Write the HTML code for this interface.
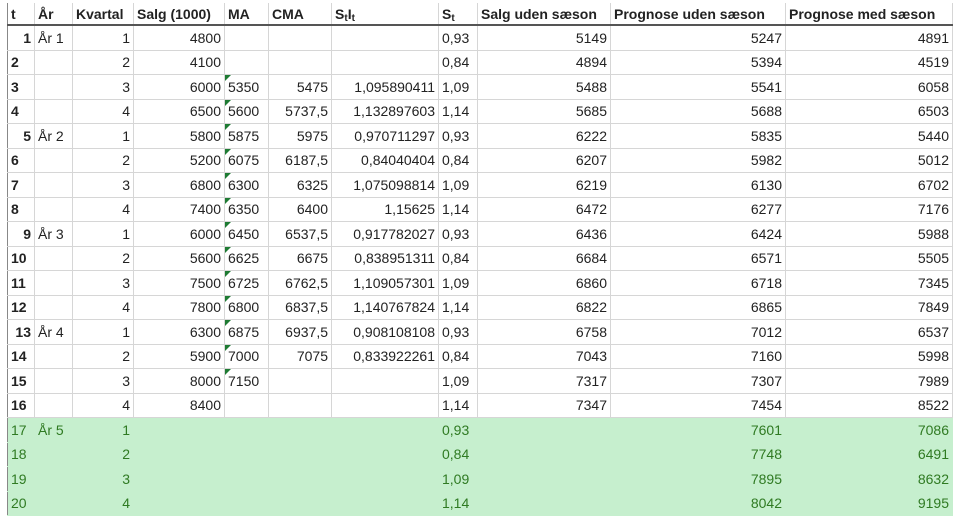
<!DOCTYPE html>
<html><head><meta charset="utf-8"><style>
html,body{margin:0;padding:0;background:#fff;width:966px;height:525px;overflow:hidden}
table{position:absolute;left:7px;top:3px;border-collapse:collapse;table-layout:fixed;font-family:"Liberation Sans",sans-serif;font-size:14px;color:#222}
td{border:1px solid #d6d6d6;padding:0 3px;height:23.5px;line-height:20px;white-space:nowrap;overflow:hidden;position:relative}
tr.h td{height:21px;font-weight:bold;border-bottom:2px solid #555;border-top:none;vertical-align:middle;padding-bottom:0}
td.r{text-align:right}
td.b{font-weight:bold}
tr.g td{background:#c6efce;color:#2f7a22;border-color:#c6efce}
td.m::before{content:"";position:absolute;left:0;top:0;border-top:6px solid #1e7b33;border-right:6px solid transparent}
tr td:first-child{border-left:1px solid #888}
sub{font-size:10px;vertical-align:-2px;line-height:0}
</style></head><body>
<table>
<colgroup><col style="width:27px"><col style="width:38px"><col style="width:61px"><col style="width:91px"><col style="width:44px"><col style="width:63px"><col style="width:107px"><col style="width:39px"><col style="width:133px"><col style="width:175px"><col style="width:167px"></colgroup>
<tr class="h"><td>t</td><td>År</td><td>Kvartal</td><td>Salg (1000)</td><td>MA</td><td>CMA</td><td>S<sub>t</sub>I<sub>t</sub></td><td>S<sub>t</sub></td><td>Salg uden sæson</td><td>Prognose uden sæson</td><td>Prognose med sæson</td></tr>
<tr><td class="r b">1</td><td>År 1</td><td class="r">1</td><td class="r">4800</td><td></td><td></td><td></td><td>0,93</td><td class="r">5149</td><td class="r">5247</td><td class="r">4891</td></tr>
<tr><td class="b">2</td><td></td><td class="r">2</td><td class="r">4100</td><td></td><td></td><td></td><td>0,84</td><td class="r">4894</td><td class="r">5394</td><td class="r">4519</td></tr>
<tr><td class="b">3</td><td></td><td class="r">3</td><td class="r">6000</td><td class="m">5350</td><td class="r">5475</td><td class="r">1,095890411</td><td>1,09</td><td class="r">5488</td><td class="r">5541</td><td class="r">6058</td></tr>
<tr><td class="b">4</td><td></td><td class="r">4</td><td class="r">6500</td><td class="m">5600</td><td class="r">5737,5</td><td class="r">1,132897603</td><td>1,14</td><td class="r">5685</td><td class="r">5688</td><td class="r">6503</td></tr>
<tr><td class="r b">5</td><td>År 2</td><td class="r">1</td><td class="r">5800</td><td class="m">5875</td><td class="r">5975</td><td class="r">0,970711297</td><td>0,93</td><td class="r">6222</td><td class="r">5835</td><td class="r">5440</td></tr>
<tr><td class="b">6</td><td></td><td class="r">2</td><td class="r">5200</td><td class="m">6075</td><td class="r">6187,5</td><td class="r">0,84040404</td><td>0,84</td><td class="r">6207</td><td class="r">5982</td><td class="r">5012</td></tr>
<tr><td class="b">7</td><td></td><td class="r">3</td><td class="r">6800</td><td class="m">6300</td><td class="r">6325</td><td class="r">1,075098814</td><td>1,09</td><td class="r">6219</td><td class="r">6130</td><td class="r">6702</td></tr>
<tr><td class="b">8</td><td></td><td class="r">4</td><td class="r">7400</td><td class="m">6350</td><td class="r">6400</td><td class="r">1,15625</td><td>1,14</td><td class="r">6472</td><td class="r">6277</td><td class="r">7176</td></tr>
<tr><td class="r b">9</td><td>År 3</td><td class="r">1</td><td class="r">6000</td><td class="m">6450</td><td class="r">6537,5</td><td class="r">0,917782027</td><td>0,93</td><td class="r">6436</td><td class="r">6424</td><td class="r">5988</td></tr>
<tr><td class="b">10</td><td></td><td class="r">2</td><td class="r">5600</td><td class="m">6625</td><td class="r">6675</td><td class="r">0,838951311</td><td>0,84</td><td class="r">6684</td><td class="r">6571</td><td class="r">5505</td></tr>
<tr><td class="b">11</td><td></td><td class="r">3</td><td class="r">7500</td><td class="m">6725</td><td class="r">6762,5</td><td class="r">1,109057301</td><td>1,09</td><td class="r">6860</td><td class="r">6718</td><td class="r">7345</td></tr>
<tr><td class="b">12</td><td></td><td class="r">4</td><td class="r">7800</td><td class="m">6800</td><td class="r">6837,5</td><td class="r">1,140767824</td><td>1,14</td><td class="r">6822</td><td class="r">6865</td><td class="r">7849</td></tr>
<tr><td class="r b">13</td><td>År 4</td><td class="r">1</td><td class="r">6300</td><td class="m">6875</td><td class="r">6937,5</td><td class="r">0,908108108</td><td>0,93</td><td class="r">6758</td><td class="r">7012</td><td class="r">6537</td></tr>
<tr><td class="b">14</td><td></td><td class="r">2</td><td class="r">5900</td><td class="m">7000</td><td class="r">7075</td><td class="r">0,833922261</td><td>0,84</td><td class="r">7043</td><td class="r">7160</td><td class="r">5998</td></tr>
<tr><td class="b">15</td><td></td><td class="r">3</td><td class="r">8000</td><td class="m">7150</td><td></td><td></td><td>1,09</td><td class="r">7317</td><td class="r">7307</td><td class="r">7989</td></tr>
<tr><td class="b">16</td><td></td><td class="r">4</td><td class="r">8400</td><td></td><td></td><td></td><td>1,14</td><td class="r">7347</td><td class="r">7454</td><td class="r">8522</td></tr>
<tr class="g"><td>17</td><td>År 5</td><td class="r">1</td><td></td><td></td><td></td><td></td><td>0,93</td><td></td><td class="r">7601</td><td class="r">7086</td></tr>
<tr class="g"><td>18</td><td></td><td class="r">2</td><td></td><td></td><td></td><td></td><td>0,84</td><td></td><td class="r">7748</td><td class="r">6491</td></tr>
<tr class="g"><td>19</td><td></td><td class="r">3</td><td></td><td></td><td></td><td></td><td>1,09</td><td></td><td class="r">7895</td><td class="r">8632</td></tr>
<tr class="g"><td>20</td><td></td><td class="r">4</td><td></td><td></td><td></td><td></td><td>1,14</td><td></td><td class="r">8042</td><td class="r">9195</td></tr>
</table>
</body></html>
